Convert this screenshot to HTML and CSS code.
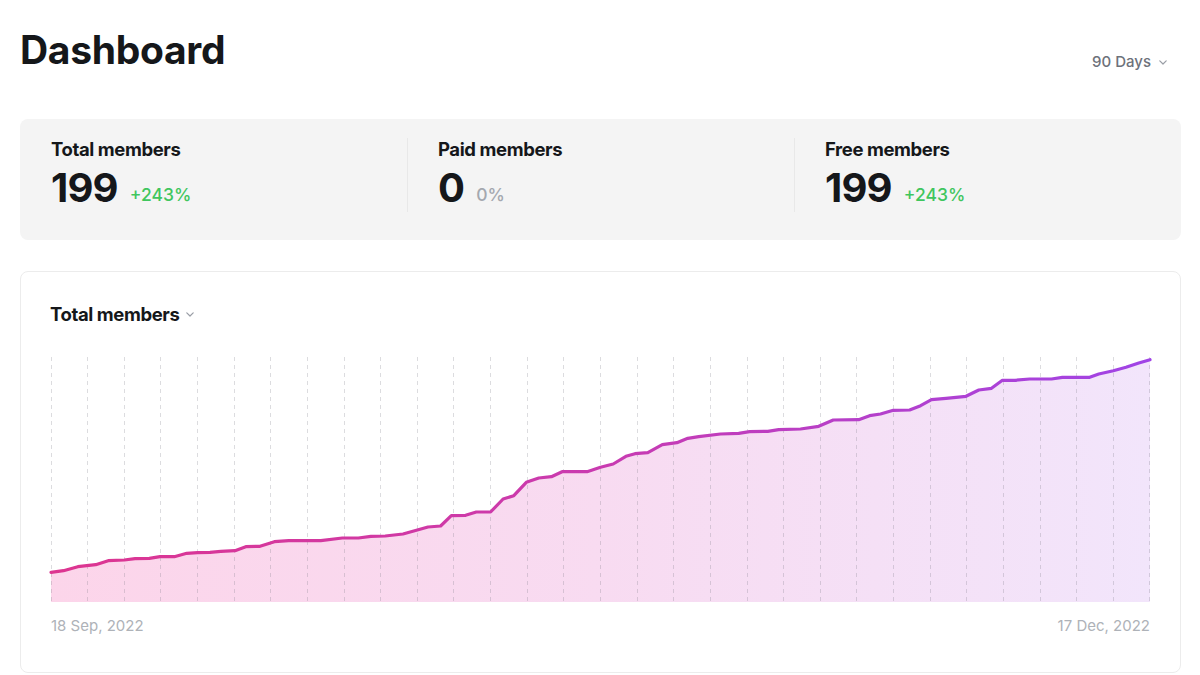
FILE: index.html
```html
<!DOCTYPE html>
<html lang="en">
  <head>
    <meta charset="UTF-8" />
    <meta name="viewport" content="width=device-width, initial-scale=1.0" />
    <title>Dashboard</title>
    <link rel="stylesheet" href="styles.css">
  </head>
  <body>
    <div class="page">
      <header class="page-header">
        <h1>Dashboard</h1>
        <button class="range-select">
          90 Days
          <svg class="chevron" width="8" height="5" viewBox="0 0 8 5">
            <path d="M0.8 0.8 L4 4 L7.2 0.8" />
          </svg>
        </button>
      </header>

      <section class="stats">
        <div class="stat">
          <p class="stat-label">Total members</p>
          <div class="stat-value">
            <span class="stat-number">199</span>
            <span class="stat-change up">+243%</span>
          </div>
        </div>
        <div class="stat">
          <p class="stat-label">Paid members</p>
          <div class="stat-value">
            <span class="stat-number">0</span>
            <span class="stat-change">0%</span>
          </div>
        </div>
        <div class="stat">
          <p class="stat-label">Free members</p>
          <div class="stat-value">
            <span class="stat-number">199</span>
            <span class="stat-change up">+243%</span>
          </div>
        </div>
      </section>

      <section class="chart-card">
        <button class="chart-title">
          Total members
          <svg class="chevron" width="8" height="5" viewBox="0 0 8 5">
            <path d="M0.8 0.8 L4 4 L7.2 0.8" />
          </svg>
        </button>

        <svg class="chart" width="1099" height="250" viewBox="0 0 1099 250">
          <defs>
            <linearGradient id="lineGrad" gradientUnits="userSpaceOnUse" x1="0" y1="0" x2="1099" y2="0">
              <stop offset="0" stop-color="#dd3590" />
              <stop offset="0.5" stop-color="#c93bb0" />
              <stop offset="1" stop-color="#a044e6" />
            </linearGradient>
            <linearGradient id="fillGrad" gradientUnits="userSpaceOnUse" x1="0" y1="0" x2="1099" y2="0">
              <stop offset="0" stop-color="#fcd5ea" />
              <stop offset="0.5" stop-color="#f8dbf1" />
              <stop offset="1" stop-color="#f2e5fb" />
            </linearGradient>
          </defs>

          <path class="area" fill="url(#fillGrad)" d="M0,218.3 L12.5,216.7 26.8,212.7 44.7,210.7 57.2,206.7 73.3,206 84,204.7 98.3,204.3 109,202.7 123.3,202.7 135.8,199.3 146.5,198.7 159,198.3 169.8,197.3 184,196.7 194.8,192.7 209,192.3 223.4,187.7 237.7,186.7 269.8,186.7 291.3,184 307.4,184 319.9,182.3 334.2,182 352,180 366.3,176 377,173 389.6,172 400.3,161.7 414.6,161.3 425.3,158 439.6,158 452.1,145 462.8,141.7 475.3,128.3 487.8,124 500.4,122.7 511.1,117.7 536.1,117.7 549.5,113.3 562.2,110 574.9,102.3 584,99.7 596.8,98.7 611.3,90.7 625.9,88.7 636.8,84.3 647.7,82.7 669.5,80 687.7,79.3 698.6,77.7 716.8,77.3 727.7,75.7 749.5,75 767.7,72.3 782.3,66 807.7,65.7 818.6,61.7 829.5,60 842.3,56.3 858.6,56 869.6,51.7 880.5,45.7 895,44.3 915,42.3 927.8,36 940.5,34.3 951.4,26.3 964.1,26.3 978.7,25 1000.5,25 1011.4,23.3 1038.7,23.3 1047.8,20 1062.3,16.7 1075,13.3 1087.8,9 1099,5.7 L1099,248 L0,248 Z" />

          <g class="grid">
            <line x1="0.5" y1="3" x2="0.5" y2="248" />
            <line x1="36.5" y1="3" x2="36.5" y2="248" />
            <line x1="73.5" y1="3" x2="73.5" y2="248" />
            <line x1="109.5" y1="3" x2="109.5" y2="248" />
            <line x1="146.5" y1="3" x2="146.5" y2="248" />
            <line x1="183.5" y1="3" x2="183.5" y2="248" />
            <line x1="219.5" y1="3" x2="219.5" y2="248" />
            <line x1="256.5" y1="3" x2="256.5" y2="248" />
            <line x1="293.5" y1="3" x2="293.5" y2="248" />
            <line x1="329.5" y1="3" x2="329.5" y2="248" />
            <line x1="366.5" y1="3" x2="366.5" y2="248" />
            <line x1="402.5" y1="3" x2="402.5" y2="248" />
            <line x1="439.5" y1="3" x2="439.5" y2="248" />
            <line x1="476.5" y1="3" x2="476.5" y2="248" />
            <line x1="512.5" y1="3" x2="512.5" y2="248" />
            <line x1="549.5" y1="3" x2="549.5" y2="248" />
            <line x1="586.5" y1="3" x2="586.5" y2="248" />
            <line x1="622.5" y1="3" x2="622.5" y2="248" />
            <line x1="659.5" y1="3" x2="659.5" y2="248" />
            <line x1="696.5" y1="3" x2="696.5" y2="248" />
            <line x1="732.5" y1="3" x2="732.5" y2="248" />
            <line x1="769.5" y1="3" x2="769.5" y2="248" />
            <line x1="805.5" y1="3" x2="805.5" y2="248" />
            <line x1="842.5" y1="3" x2="842.5" y2="248" />
            <line x1="879.5" y1="3" x2="879.5" y2="248" />
            <line x1="915.5" y1="3" x2="915.5" y2="248" />
            <line x1="952.5" y1="3" x2="952.5" y2="248" />
            <line x1="989.5" y1="3" x2="989.5" y2="248" />
            <line x1="1025.5" y1="3" x2="1025.5" y2="248" />
            <line x1="1062.5" y1="3" x2="1062.5" y2="248" />
            <line x1="1098.5" y1="3" x2="1098.5" y2="248" />
          </g>

          <polyline class="line" stroke="url(#lineGrad)" points="0,218.3 12.5,216.7 26.8,212.7 44.7,210.7 57.2,206.7 73.3,206 84,204.7 98.3,204.3 109,202.7 123.3,202.7 135.8,199.3 146.5,198.7 159,198.3 169.8,197.3 184,196.7 194.8,192.7 209,192.3 223.4,187.7 237.7,186.7 269.8,186.7 291.3,184 307.4,184 319.9,182.3 334.2,182 352,180 366.3,176 377,173 389.6,172 400.3,161.7 414.6,161.3 425.3,158 439.6,158 452.1,145 462.8,141.7 475.3,128.3 487.8,124 500.4,122.7 511.1,117.7 536.1,117.7 549.5,113.3 562.2,110 574.9,102.3 584,99.7 596.8,98.7 611.3,90.7 625.9,88.7 636.8,84.3 647.7,82.7 669.5,80 687.7,79.3 698.6,77.7 716.8,77.3 727.7,75.7 749.5,75 767.7,72.3 782.3,66 807.7,65.7 818.6,61.7 829.5,60 842.3,56.3 858.6,56 869.6,51.7 880.5,45.7 895,44.3 915,42.3 927.8,36 940.5,34.3 951.4,26.3 964.1,26.3 978.7,25 1000.5,25 1011.4,23.3 1038.7,23.3 1047.8,20 1062.3,16.7 1075,13.3 1087.8,9 1099,5.7" />
        </svg>

        <div class="chart-dates">
          <span>18 Sep, 2022</span>
          <span>17 Dec, 2022</span>
        </div>
      </section>
    </div>
  </body>
</html>
```

FILE: styles.css
```css
* {
  margin: 0;
  padding: 0;
  box-sizing: border-box;
}
body {
  font-family: "Inter", "Liberation Sans", sans-serif;
  background: #fff;
  color: #15171a;
}
button {
  border: none;
  background: none;
  font-family: inherit;
  cursor: pointer;
}
.page {
  padding: 27px 19px 0 20px;
}
.page-header {
  display: flex;
  justify-content: space-between;
  align-items: flex-start;
}
h1 {
  font-size: 39px;
  font-weight: 700;
  line-height: 46px;
  letter-spacing: -0.3px;
}
.range-select {
  display: flex;
  align-items: center;
  gap: 8px;
  margin-top: 25px;
  margin-right: 14px;
  font-size: 15px;
  font-weight: 500;
  line-height: 20px;
  color: #6d717a;
}
.chevron {
  display: block;
  fill: none;
  stroke: #9a9ea6;
  stroke-width: 1.2;
  stroke-linecap: round;
  stroke-linejoin: round;
}
.stats {
  display: grid;
  grid-template-columns: repeat(3, 1fr);
  margin-top: 46px;
  padding: 19px 0 28px;
  background: #f4f4f4;
  border-radius: 8px;
}
.stat {
  padding: 0 31px 2px;
}
.stat + .stat {
  border-left: 1px solid #e8e8e8;
  padding-left: 30px;
}
.stat-label {
  font-size: 18.5px;
  font-weight: 700;
  line-height: 22px;
  letter-spacing: -0.4px;
}
.stat-value {
  display: flex;
  align-items: baseline;
  gap: 12px;
  margin-top: 6px;
}
.stat-number {
  font-size: 40px;
  font-weight: 700;
  line-height: 44px;
  letter-spacing: -0.8px;
}
.stat-change {
  font-size: 17.5px;
  font-weight: 500;
  color: #a4a8af;
  position: relative;
  top: -1px;
}
.stat-change.up {
  color: #3fc65e;
}
.chart-card {
  margin-top: 31px;
  padding: 31px 30px 36px;
  border: 1px solid #ececec;
  border-radius: 8px;
}
.chart-title {
  display: flex;
  align-items: center;
  gap: 7px;
  margin-left: -1px;
  font-size: 18.5px;
  font-weight: 700;
  line-height: 22px;
  letter-spacing: -0.4px;
  color: #15171a;
}
.chart {
  display: block;
  margin-top: 29px;
  overflow: visible;
}
.grid line {
  stroke: rgba(120, 120, 130, 0.26);
  stroke-width: 1;
  stroke-dasharray: 4 4;
}
.line {
  fill: none;
  stroke-width: 3.2;
  stroke-linejoin: round;
  stroke-linecap: round;
}
.chart-dates {
  display: flex;
  justify-content: space-between;
  margin-top: 12px;
  font-size: 15px;
  line-height: 20px;
  color: #aeb2b8;
}
```
